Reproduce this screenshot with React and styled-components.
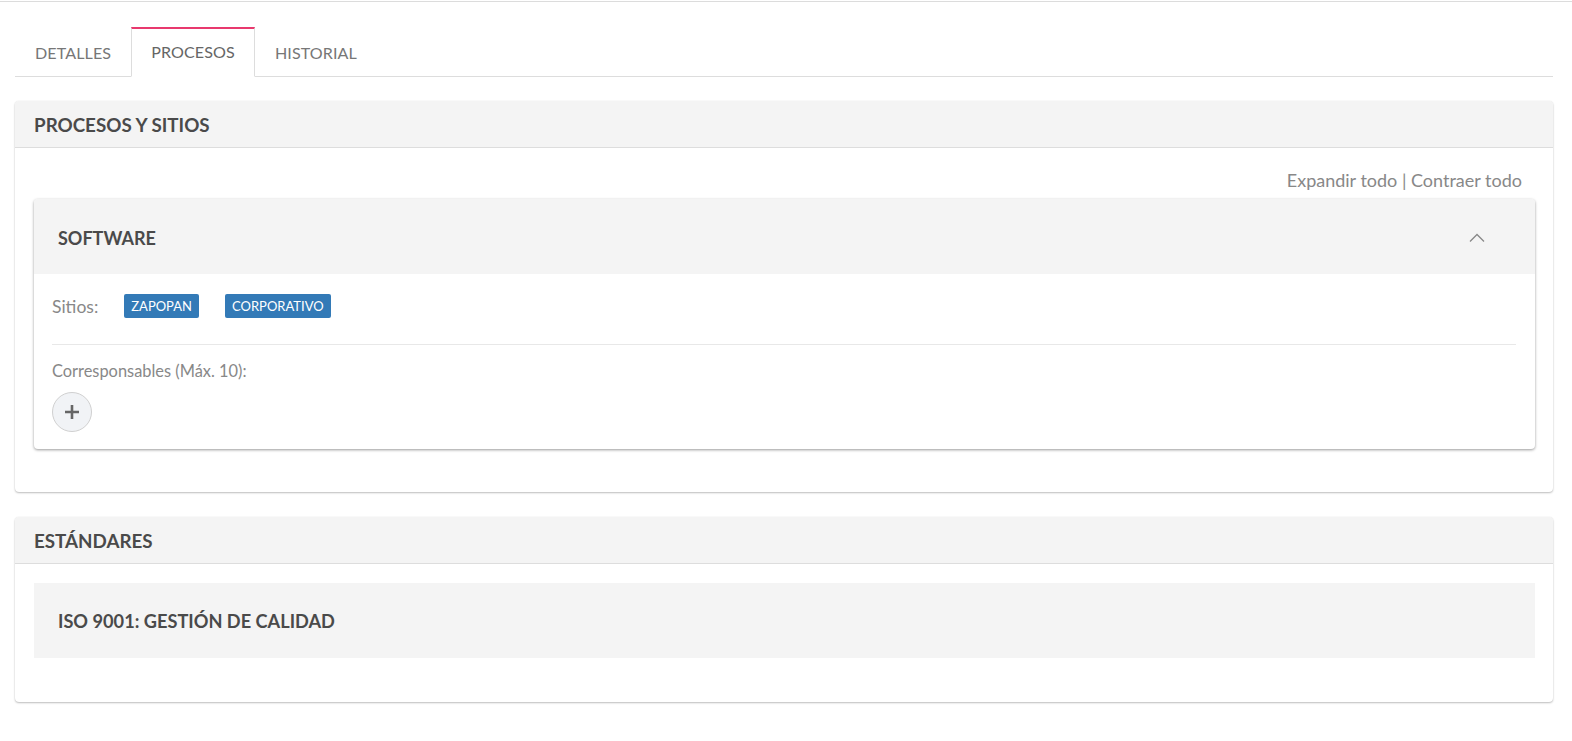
import React from "react";
import styled, { createGlobalStyle } from "styled-components";

const Global = createGlobalStyle`
  html, body { margin: 0; padding: 0; background: #fff; }
  body { font-family: Lato, "Open Sans", sans-serif; color: #555; }
  * { box-sizing: border-box; }
`;

const Page = styled.div`
  border-top: 1px solid #dcdcdc;
  margin-top: 1px;
  padding: 25px 19px 40px 15px;
`;

const TabBar = styled.div`
  display: flex;
  border-bottom: 1px solid #ddd;
  margin-bottom: 24px;
`;

const Tab = styled.div`
  height: 50px;
  padding: 0 19px 2px;
  display: flex;
  align-items: center;
  font-size: 16.1px;
  letter-spacing: 0.1px;
  text-transform: uppercase;
  color: ${(p) => (p.$active ? "#666" : "#777")};
  margin-bottom: -1px;
  border: 1px solid ${(p) => (p.$active ? "#ddd" : "transparent")};
  border-top: 2px solid ${(p) => (p.$active ? "#e8396e" : "transparent")};
  border-bottom: ${(p) => (p.$active ? "1px solid #fff" : "0")};
  background: ${(p) => (p.$active ? "#fff" : "transparent")};
`;

const Card = styled.section`
  background: #fff;
  border-radius: 4px;
  box-shadow: 0 1px 2px rgba(0, 0, 0, 0.25), 0 0 1px rgba(0, 0, 0, 0.12);
  margin-bottom: 25px;
  overflow: hidden;
`;

const CardHeader = styled.div`
  height: 47px;
  display: flex;
  align-items: center;
  padding: 0 19px;
  background: #f4f4f4;
  border-bottom: 1px solid #ddd;
  font-size: 18.8px;
  font-weight: 700;
  color: #4a4a4a;
`;

const CardBody = styled.div`
  padding: ${(p) => p.$pad || "18px 18px 43px 19px"};
`;

const Links = styled.div`
  text-align: right;
  font-size: 18px;
  color: #888;
  padding-right: 13px;
  line-height: 20px;
  margin-top: 4px;
  margin-bottom: 9px;
`;

const Panel = styled.div`
  border-radius: 4px;
  box-shadow: 0 1px 3px rgba(0, 0, 0, 0.4);
  background: #fff;
`;

const PanelHeader = styled.div`
  height: 75px;
  display: flex;
  align-items: center;
  justify-content: space-between;
  padding: 2px 50px 0 24px;
  background: #f4f4f4;
  border-radius: 4px 4px 0 0;
  font-size: 18px;
  font-weight: 700;
  color: #4a4a4a;
`;

const PanelBody = styled.div`
  padding: 20px 19px 17px 18px;
`;

const SitesRow = styled.div`
  display: flex;
  align-items: center;
  gap: 26px;
  padding-bottom: 26px;
  border-bottom: 1px solid #e8e8e8;
`;

const Label = styled.span`
  font-size: 17.5px;
  color: #888;
`;

const Badge = styled.span`
  display: inline-flex;
  align-items: center;
  height: 24px;
  padding: 0 7px;
  background: #337ab7;
  border-radius: 2px;
  color: #fff;
  font-size: 13px;
  text-transform: uppercase;
`;

const SmallLabel = styled.div`
  font-size: 16.4px;
  color: #888;
  margin-top: 16px;
  margin-bottom: 12px;
`;

const AddButton = styled.button`
  width: 40px;
  height: 40px;
  border-radius: 50%;
  border: 1px solid #d0d0d0;
  background: #f1f3f6;
  display: flex;
  align-items: center;
  justify-content: center;
  padding: 0;
`;

const Item = styled.div`
  height: 75px;
  display: flex;
  align-items: center;
  padding: 0 24px;
  background: #f4f4f4;
  font-size: 18.2px;
  font-weight: 700;
  color: #4a4a4a;
`;

export default function App() {
  return (
    <>
      <Global />
      <Page>
        <TabBar>
          <Tab>Detalles</Tab>
          <Tab $active>Procesos</Tab>
          <Tab>Historial</Tab>
        </TabBar>

        <Card>
          <CardHeader>PROCESOS Y SITIOS</CardHeader>
          <CardBody>
            <Links>Expandir todo | Contraer todo</Links>
            <Panel>
              <PanelHeader>
                <span>SOFTWARE</span>
                <svg width="16" height="10" viewBox="0 0 16 10">
                  <path d="M1 8.5 L8 1.5 L15 8.5" fill="none" stroke="#888" strokeWidth="1.3" />
                </svg>
              </PanelHeader>
              <PanelBody>
                <SitesRow>
                  <Label>Sitios:</Label>
                  <Badge>Zapopan</Badge>
                  <Badge>Corporativo</Badge>
                </SitesRow>
                <SmallLabel>Corresponsables (Máx. 10):</SmallLabel>
                <AddButton aria-label="Agregar">
                  <svg width="16" height="16" viewBox="0 0 16 16">
                    <path d="M8 1 V15 M1 8 H15" stroke="#666" strokeWidth="2.6" />
                  </svg>
                </AddButton>
              </PanelBody>
            </Panel>
          </CardBody>
        </Card>

        <Card>
          <CardHeader>ESTÁNDARES</CardHeader>
          <CardBody $pad="19px 18px 44px 19px">
            <Item>ISO 9001: GESTIÓN DE CALIDAD</Item>
          </CardBody>
        </Card>
      </Page>
    </>
  );
}
